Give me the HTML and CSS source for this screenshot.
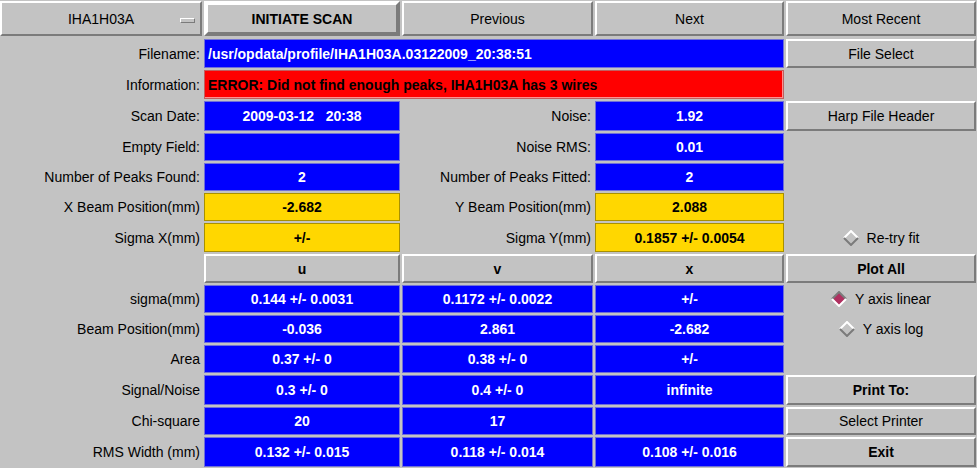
FILE: index.html
```html
<!DOCTYPE html>
<html>
<head>
<meta charset="utf-8">
<title>Harp Scan</title>
<link rel="stylesheet" href="styles.css">
</head>
<body>
<div class="panel">
  <!-- row 1 -->
  <div class="btn menu top">IHA1H03A<span class="ind"></span></div>
  <div class="btn default bold top">INITIATE SCAN</div>
  <div class="btn top">Previous</div>
  <div class="btn top">Next</div>
  <div class="btn top">Most Recent</div>

  <!-- row 2 -->
  <div class="lbl">Filename:</div>
  <div class="fld blue left span3">/usr/opdata/profile/IHA1H03A.03122009_20:38:51</div>
  <div class="btn">File Select</div>

  <!-- row 3 -->
  <div class="lbl">Information:</div>
  <div class="fld red left span3">ERROR: Did not find enough peaks, IHA1H03A has 3 wires</div>
  <div class="empty"></div>

  <!-- row 4 -->
  <div class="lbl">Scan Date:</div>
  <div class="fld blue">2009-03-12&nbsp;&nbsp;&nbsp;20:38</div>
  <div class="lbl">Noise:</div>
  <div class="fld blue">1.92</div>
  <div class="btn">Harp File Header</div>

  <!-- row 5 -->
  <div class="lbl">Empty Field:</div>
  <div class="fld blue"></div>
  <div class="lbl">Noise RMS:</div>
  <div class="fld blue">0.01</div>
  <div class="empty"></div>

  <!-- row 6 -->
  <div class="lbl">Number of Peaks Found:</div>
  <div class="fld blue">2</div>
  <div class="lbl">Number of Peaks Fitted:</div>
  <div class="fld blue">2</div>
  <div class="empty"></div>

  <!-- row 7 -->
  <div class="lbl">X Beam Position(mm)</div>
  <div class="fld yellow">-2.682</div>
  <div class="lbl">Y Beam Position(mm)</div>
  <div class="fld yellow">2.088</div>
  <div class="empty"></div>

  <!-- row 8 -->
  <div class="lbl">Sigma X(mm)</div>
  <div class="fld yellow">+/-</div>
  <div class="lbl">Sigma Y(mm)</div>
  <div class="fld yellow">0.1857 +/- 0.0054</div>
  <div class="radio"><svg class="dia" width="16" height="16" viewBox="0 0 16 16"><polyline points="1,8 8,1 15,8" class="hi"/><polyline points="1,8 8,15 15,8" class="lo"/></svg><span>Re-try fit</span></div>

  <!-- row 9 -->
  <div class="empty"></div>
  <div class="btn hdr bold">u</div>
  <div class="btn hdr bold">v</div>
  <div class="btn hdr bold">x</div>
  <div class="btn bold">Plot All</div>

  <!-- row 10 -->
  <div class="lbl">sigma(mm)</div>
  <div class="fld blue">0.144 +/- 0.0031</div>
  <div class="fld blue">0.1172 +/- 0.0022</div>
  <div class="fld blue">+/-</div>
  <div class="radio"><svg class="dia" width="16" height="16" viewBox="0 0 16 16"><polygon points="1,8 8,1 15,8 8,15" class="sel"/><polyline points="1,8 8,1 15,8" class="lo"/><polyline points="1,8 8,15 15,8" class="hi"/></svg><span>Y axis linear</span></div>

  <!-- row 11 -->
  <div class="lbl">Beam Position(mm)</div>
  <div class="fld blue">-0.036</div>
  <div class="fld blue">2.861</div>
  <div class="fld blue">-2.682</div>
  <div class="radio"><svg class="dia" width="16" height="16" viewBox="0 0 16 16"><polyline points="1,8 8,1 15,8" class="hi"/><polyline points="1,8 8,15 15,8" class="lo"/></svg><span>Y axis log</span></div>

  <!-- row 12 -->
  <div class="lbl">Area</div>
  <div class="fld blue">0.37 +/- 0</div>
  <div class="fld blue">0.38 +/- 0</div>
  <div class="fld blue">+/-</div>
  <div class="empty"></div>

  <!-- row 13 -->
  <div class="lbl">Signal/Noise</div>
  <div class="fld blue">0.3 +/- 0</div>
  <div class="fld blue">0.4 +/- 0</div>
  <div class="fld blue">infinite</div>
  <div class="btn bold">Print To:</div>

  <!-- row 14 -->
  <div class="lbl">Chi-square</div>
  <div class="fld blue">20</div>
  <div class="fld blue">17</div>
  <div class="fld blue"></div>
  <div class="btn">Select Printer</div>

  <!-- row 15 -->
  <div class="lbl">RMS Width (mm)</div>
  <div class="fld blue">0.132 +/- 0.015</div>
  <div class="fld blue">0.118 +/- 0.014</div>
  <div class="fld blue">0.108 +/- 0.016</div>
  <div class="btn bold">Exit</div>
</div>
</body>
</html>
```

FILE: styles.css
```css
html, body {
  margin: 0;
  padding: 0;
  background: #c3c3c3;
}

.panel {
  width: 977px;
  height: 468px;
  display: grid;
  grid-template-columns: 203px 198px 193px 191px 192px;
  grid-template-rows: 38px 31px 31px 32px 30px 30px 30px 31px 31px 30px 30px 30px 32px 30px 32px;
  background: #c3c3c3;
  font-family: "Liberation Sans", Arial, sans-serif;
  font-size: 14px;
  color: #000;
  overflow: hidden;
}

.lbl {
  display: flex;
  align-items: center;
  justify-content: flex-end;
  padding-right: 3px;
  white-space: nowrap;
}

.fld {
  margin: 1px 1px;
  display: flex;
  align-items: center;
  justify-content: center;
  font-weight: bold;
  white-space: nowrap;
  box-sizing: border-box;
}

.fld.left {
  justify-content: flex-start;
  padding-left: 3px;
}

.span3 {
  grid-column: span 3;
}

.blue {
  background: #0000ff;
  color: #fff;
  border: 1px solid #7070d8;
  box-shadow: inset 0 0 0 1px #0000ff, inset 0 0 0 2px #0000ff;
}

.red {
  background: #ff0000;
  color: #000;
  border: 1px solid #c06060;
  box-shadow: inset -1px -1px 0 0 #ff9090;
}

.yellow {
  background: #ffd700;
  color: #000;
  border: 1px solid #a89000;
}

.btn {
  margin: 1px 1px;
  box-sizing: border-box;
  display: flex;
  align-items: center;
  justify-content: center;
  background: #c3c3c3;
  border-style: solid;
  border-width: 2px;
  border-color: #ffffff #7b7b7b #7b7b7b #ffffff;
  white-space: nowrap;
}

.btn.top {
  margin: 1px 1px 2px 1px;
}

.btn.menu {
  margin-left: 0;
  position: relative;
}

.btn.default {
  border-width: 4px;
}

.bold {
  font-weight: bold;
}

.ind {
  position: absolute;
  right: 5px;
  top: 15px;
  width: 15px;
  height: 5px;
  box-sizing: border-box;
  border-style: solid;
  border-width: 1px;
  border-color: #ffffff #7b7b7b #7b7b7b #ffffff;
  background: #c3c3c3;
}

.radio {
  display: flex;
  align-items: center;
  justify-content: center;
  gap: 8px;
  white-space: nowrap;
}

.dia {
  display: block;
}

.dia .hi {
  fill: none;
  stroke: #ffffff;
  stroke-width: 2;
}

.dia .lo {
  fill: none;
  stroke: #7b7b7b;
  stroke-width: 2;
}

.dia .sel {
  fill: #b03060;
  stroke: none;
}
```
